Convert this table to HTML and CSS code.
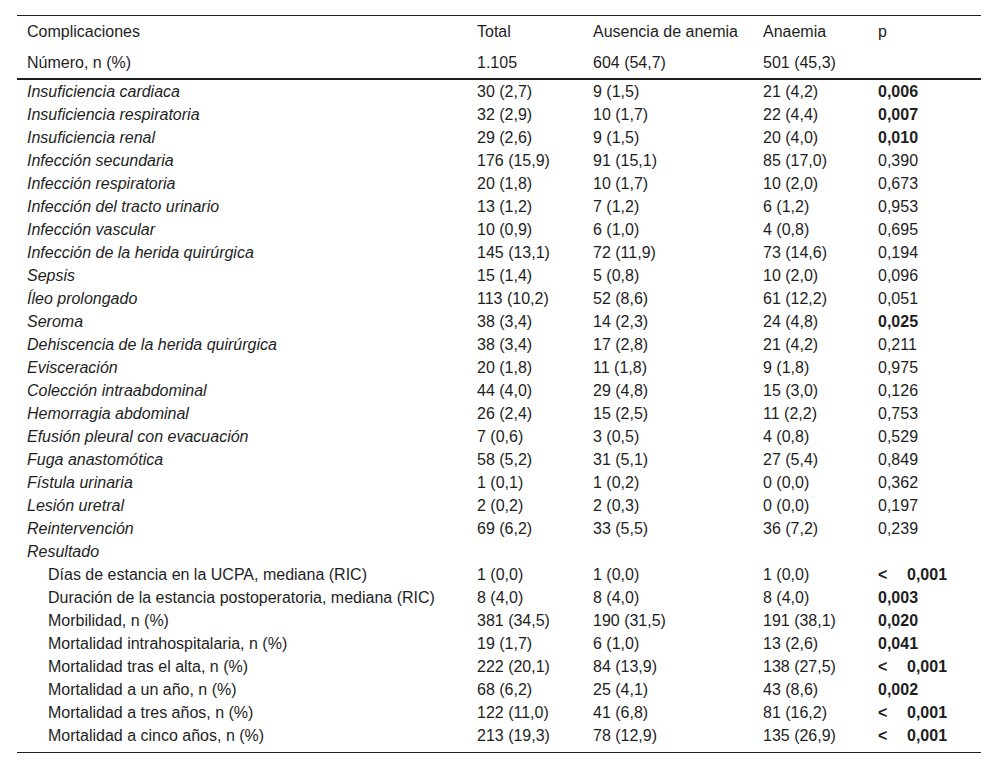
FILE: index.html
```html
<!DOCTYPE html>
<html lang="es">
<head>
<meta charset="utf-8">
<title>Complicaciones</title>
<link rel="stylesheet" href="styles.css">
</head>
<body>
<div class="wrap">
<table class="tbl">
  <colgroup>
    <col class="c1"><col class="c2"><col class="c3"><col class="c4"><col class="c5">
  </colgroup>
  <thead>
    <tr class="h"><td>Complicaciones</td><td>Total</td><td>Ausencia de anemia</td><td>Anaemia</td><td>p</td></tr>
    <tr class="h"><td>Número, n (%)</td><td>1.105</td><td>604 (54,7)</td><td>501 (45,3)</td><td></td></tr>
  </thead>
  <tbody>
    <tr><td class="it">Insuficiencia cardiaca</td><td>30 (2,7)</td><td>9 (1,5)</td><td>21 (4,2)</td><td class="b">0,006</td></tr>
    <tr><td class="it">Insuficiencia respiratoria</td><td>32 (2,9)</td><td>10 (1,7)</td><td>22 (4,4)</td><td class="b">0,007</td></tr>
    <tr><td class="it">Insuficiencia renal</td><td>29 (2,6)</td><td>9 (1,5)</td><td>20 (4,0)</td><td class="b">0,010</td></tr>
    <tr><td class="it">Infección secundaria</td><td>176 (15,9)</td><td>91 (15,1)</td><td>85 (17,0)</td><td>0,390</td></tr>
    <tr><td class="it">Infección respiratoria</td><td>20 (1,8)</td><td>10 (1,7)</td><td>10 (2,0)</td><td>0,673</td></tr>
    <tr><td class="it">Infección del tracto urinario</td><td>13 (1,2)</td><td>7 (1,2)</td><td>6 (1,2)</td><td>0,953</td></tr>
    <tr><td class="it">Infección vascular</td><td>10 (0,9)</td><td>6 (1,0)</td><td>4 (0,8)</td><td>0,695</td></tr>
    <tr><td class="it">Infección de la herida quirúrgica</td><td>145 (13,1)</td><td>72 (11,9)</td><td>73 (14,6)</td><td>0,194</td></tr>
    <tr><td class="it">Sepsis</td><td>15 (1,4)</td><td>5 (0,8)</td><td>10 (2,0)</td><td>0,096</td></tr>
    <tr><td class="it">Íleo prolongado</td><td>113 (10,2)</td><td>52 (8,6)</td><td>61 (12,2)</td><td>0,051</td></tr>
    <tr><td class="it">Seroma</td><td>38 (3,4)</td><td>14 (2,3)</td><td>24 (4,8)</td><td class="b">0,025</td></tr>
    <tr><td class="it">Dehiscencia de la herida quirúrgica</td><td>38 (3,4)</td><td>17 (2,8)</td><td>21 (4,2)</td><td>0,211</td></tr>
    <tr><td class="it">Evisceración</td><td>20 (1,8)</td><td>11 (1,8)</td><td>9 (1,8)</td><td>0,975</td></tr>
    <tr><td class="it">Colección intraabdominal</td><td>44 (4,0)</td><td>29 (4,8)</td><td>15 (3,0)</td><td>0,126</td></tr>
    <tr><td class="it">Hemorragia abdominal</td><td>26 (2,4)</td><td>15 (2,5)</td><td>11 (2,2)</td><td>0,753</td></tr>
    <tr><td class="it">Efusión pleural con evacuación</td><td>7 (0,6)</td><td>3 (0,5)</td><td>4 (0,8)</td><td>0,529</td></tr>
    <tr><td class="it">Fuga anastomótica</td><td>58 (5,2)</td><td>31 (5,1)</td><td>27 (5,4)</td><td>0,849</td></tr>
    <tr><td class="it">Fístula urinaria</td><td>1 (0,1)</td><td>1 (0,2)</td><td>0 (0,0)</td><td>0,362</td></tr>
    <tr><td class="it">Lesión uretral</td><td>2 (0,2)</td><td>2 (0,3)</td><td>0 (0,0)</td><td>0,197</td></tr>
    <tr><td class="it">Reintervención</td><td>69 (6,2)</td><td>33 (5,5)</td><td>36 (7,2)</td><td>0,239</td></tr>
    <tr><td class="it">Resultado</td><td></td><td></td><td></td><td></td></tr>
    <tr><td class="ind">Días de estancia en la UCPA, mediana (RIC)</td><td>1 (0,0)</td><td>1 (0,0)</td><td>1 (0,0)</td><td class="b"><span class="lt">&lt;</span>0,001</td></tr>
    <tr><td class="ind">Duración de la estancia postoperatoria, mediana (RIC)</td><td>8 (4,0)</td><td>8 (4,0)</td><td>8 (4,0)</td><td class="b">0,003</td></tr>
    <tr><td class="ind">Morbilidad, n (%)</td><td>381 (34,5)</td><td>190 (31,5)</td><td>191 (38,1)</td><td class="b">0,020</td></tr>
    <tr><td class="ind">Mortalidad intrahospitalaria, n (%)</td><td>19 (1,7)</td><td>6 (1,0)</td><td>13 (2,6)</td><td class="b">0,041</td></tr>
    <tr><td class="ind">Mortalidad tras el alta, n (%)</td><td>222 (20,1)</td><td>84 (13,9)</td><td>138 (27,5)</td><td class="b"><span class="lt">&lt;</span>0,001</td></tr>
    <tr><td class="ind">Mortalidad a un año, n (%)</td><td>68 (6,2)</td><td>25 (4,1)</td><td>43 (8,6)</td><td class="b">0,002</td></tr>
    <tr><td class="ind">Mortalidad a tres años, n (%)</td><td>122 (11,0)</td><td>41 (6,8)</td><td>81 (16,2)</td><td class="b"><span class="lt">&lt;</span>0,001</td></tr>
    <tr class="last"><td class="ind">Mortalidad a cinco años, n (%)</td><td>213 (19,3)</td><td>78 (12,9)</td><td>135 (26,9)</td><td class="b"><span class="lt">&lt;</span>0,001</td></tr>
  </tbody>
</table>
</div>
</body>
</html>
```
FILE: styles.css
```css
html, body {
  margin: 0;
  padding: 0;
  background: #fff;
}
body {
  font-family: "Liberation Sans", Arial, sans-serif;
  font-size: 16px;
  color: #1e1e1e;
}
.wrap {
  padding: 15px 0 0 17px;
}
.tbl {
  width: 964px;
  table-layout: fixed;
  border-collapse: collapse;
  border-top: 1px solid #1e1e1e;
  border-bottom: 1px solid #1e1e1e;
}
.c1 { width: 450px; }
.c2 { width: 116px; }
.c3 { width: 170px; }
.c4 { width: 115px; }
.c5 { width: 113px; }
.tbl td {
  padding: 2px 10px;
  height: 19px;
  line-height: 19px;
  white-space: nowrap;
  text-align: left;
  vertical-align: middle;
}
.tbl thead tr.h td {
  height: 31px;
  padding: 0 10px;
}
.tbl thead {
  border-bottom: 2px solid #1e1e1e;
}
.tbl tbody tr.last td {
  padding-bottom: 7px;
}
.it { font-style: italic; }
.ind { padding-left: 31px !important; }
.b { font-weight: bold; }
.lt {
  display: inline-block;
  width: 29px;
}
```
